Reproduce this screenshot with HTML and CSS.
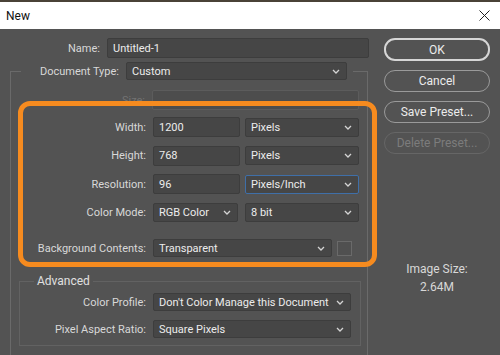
FILE: index.html
```html
<!DOCTYPE html>
<html lang="en">
<head>
  <meta charset="UTF-8">
  <meta name="viewport" content="width=device-width, initial-scale=1.0">
  <title>New</title>
  <link rel="stylesheet" href="styles.css">
</head>
<body>
  <div class="titlebar">
    <span class="title">New</span>
    <svg class="close" width="11" height="11" viewBox="0 0 11 11">
      <path d="M0.5 0.5 L10.5 10.5 M10.5 0.5 L0.5 10.5" stroke="#222" stroke-width="1" fill="none"/>
    </svg>
  </div>

  <div class="dialog">
    <div class="form">
      <div class="row nameRow">
        <label class="label">Name:</label>
        <div class="field nameField">Untitled-1</div>
      </div>

      <fieldset class="group">
        <legend class="row docRow">
          <span class="label">Document Type:</span>
          <div class="field select docField">Custom<svg class="chev" width="8" height="5" viewBox="0 0 8 5"><path d="M1 1 L4 4 L7 1" stroke="#d4d4d4" stroke-width="1.3" fill="none"/></svg></div>
        </legend>

        <div class="row sizeRow">
          <span class="label disabled">Size:</span>
          <div class="field disabledField"></div>
        </div>

        <div class="highlight">
          <div class="row">
            <span class="label">Width:</span>
            <div class="field num">1200</div>
            <div class="field select unit">Pixels<svg class="chev" width="8" height="5" viewBox="0 0 8 5"><path d="M1 1 L4 4 L7 1" stroke="#d4d4d4" stroke-width="1.3" fill="none"/></svg></div>
          </div>
          <div class="row">
            <span class="label">Height:</span>
            <div class="field num">768</div>
            <div class="field select unit">Pixels<svg class="chev" width="8" height="5" viewBox="0 0 8 5"><path d="M1 1 L4 4 L7 1" stroke="#d4d4d4" stroke-width="1.3" fill="none"/></svg></div>
          </div>
          <div class="row">
            <span class="label">Resolution:</span>
            <div class="field num">96</div>
            <div class="field select unit focused">Pixels/Inch<svg class="chev" width="8" height="5" viewBox="0 0 8 5"><path d="M1 1 L4 4 L7 1" stroke="#d4d4d4" stroke-width="1.3" fill="none"/></svg></div>
          </div>
          <div class="row">
            <span class="label">Color Mode:</span>
            <div class="field select mode">RGB Color<svg class="chev" width="8" height="5" viewBox="0 0 8 5"><path d="M1 1 L4 4 L7 1" stroke="#d4d4d4" stroke-width="1.3" fill="none"/></svg></div>
            <div class="field select unit">8 bit<svg class="chev" width="8" height="5" viewBox="0 0 8 5"><path d="M1 1 L4 4 L7 1" stroke="#d4d4d4" stroke-width="1.3" fill="none"/></svg></div>
          </div>
          <div class="row bgRow">
            <span class="label">Background Contents:</span>
            <div class="field select bgField">Transparent<svg class="chev" width="8" height="5" viewBox="0 0 8 5"><path d="M1 1 L4 4 L7 1" stroke="#d4d4d4" stroke-width="1.3" fill="none"/></svg></div>
            <div class="swatch"></div>
          </div>
        </div>

        <fieldset class="advanced">
          <legend class="advLegend">Advanced</legend>
          <div class="row">
            <span class="label advLabel">Color Profile:</span>
            <div class="field select advField">Don't Color Manage this Document<svg class="chev" width="8" height="5" viewBox="0 0 8 5"><path d="M1 1 L4 4 L7 1" stroke="#d4d4d4" stroke-width="1.3" fill="none"/></svg></div>
          </div>
          <div class="row">
            <span class="label advLabel">Pixel Aspect Ratio:</span>
            <div class="field select advField">Square Pixels<svg class="chev" width="8" height="5" viewBox="0 0 8 5"><path d="M1 1 L4 4 L7 1" stroke="#d4d4d4" stroke-width="1.3" fill="none"/></svg></div>
          </div>
        </fieldset>
      </fieldset>
    </div>

    <div class="side">
      <div class="btn default">OK</div>
      <div class="btn">Cancel</div>
      <div class="btn">Save Preset...</div>
      <div class="btn off">Delete Preset...</div>
      <div class="imageSize">
        <div>Image Size:</div>
        <div class="sizeValue">2.64M</div>
      </div>
    </div>
  </div>
</body>
</html>
```

FILE: styles.css
```css
body {
  margin: 0;
  width: 500px;
  height: 355px;
  overflow: hidden;
  background: #535353;
  font-family: Roboto, "Noto Sans", sans-serif;
  font-size: 11px;
  color: #d8d8d8;
}

.titlebar {
  height: 27px;
  border-top: 2px solid #4a4237;
  background: #ffffff;
  display: flex;
  align-items: center;
  justify-content: space-between;
  padding: 0 10px 0 6px;
}

.title {
  color: #111;
  font-size: 12px;
}

.dialog {
  display: flex;
  padding-top: 9px;
}

.form {
  width: 384px;
  flex: none;
}

.row {
  display: flex;
  align-items: center;
  gap: 7px;
}

.label {
  flex: none;
  text-align: right;
  white-space: nowrap;
}

.field {
  box-sizing: border-box;
  height: 20px;
  background: #464646;
  border: 1px solid #3d3d3d;
  border-radius: 2px;
  color: #ececec;
  padding-left: 5px;
  display: flex;
  align-items: center;
  white-space: nowrap;
  overflow: hidden;
}

.select {
  justify-content: space-between;
  padding-right: 6px;
  height: 19px;
}

.chev {
  flex: none;
}

.nameRow .label {
  width: 100px;
}

.nameField {
  width: 262px;
}

.group {
  box-sizing: border-box;
  width: 358px;
  margin: 4px 0 0 10px;
  padding: 0 0 20px 0;
  border: 1px solid #6a6a6a;
  min-width: 0;
}

.docRow {
  margin-left: 10px;
  padding: 0 6px 0 0;
  width: 332px;
  box-sizing: border-box;
}

.docRow .label {
  width: 98px;
}

.docField {
  width: 221px;
  height: 18px;
}

.sizeRow {
  margin-top: 10px;
}

.sizeRow .label {
  width: 134px;
}

.disabled {
  color: #727272;
}

.disabledField {
  width: 207px;
  background: #4d4d4d;
  border-color: #5c5c5c;
}

.highlight {
  position: relative;
  box-sizing: border-box;
  width: 359px;
  margin: -9px 0 0 7px;
  border: 5px solid #f68b1f;
  border-radius: 12px;
  padding: 11px 13px 5px 0;
  display: flex;
  flex-direction: column;
  gap: 8.5px;
}

.highlight .label {
  width: 123px;
}

.highlight .row {
  gap: 0;
}

.highlight .row .field:nth-child(2) {
  margin-left: 7px;
}

.num {
  width: 87px;
}

.unit {
  width: 114px;
  margin-left: 5px;
}

.mode {
  width: 85px;
  margin-left: 7px;
}

.mode + .unit {
  margin-left: 7px;
}

.focused {
  border-color: #3f6fa8;
}

.bgRow {
  margin-top: 9px;
}

.bgField {
  width: 179px;
  height: 18px;
}

.swatch {
  width: 15px;
  height: 15px;
  box-sizing: border-box;
  margin-left: 5px;
  border: 1px solid #6a6a6a;
  background: #505050;
}

.advanced {
  box-sizing: border-box;
  width: 342px;
  margin: 7px 0 0 8px;
  padding: 5px 0 7px 0;
  border: 1px solid #626262;
  min-width: 0;
  display: flex;
  flex-direction: column;
  gap: 9px;
}

.advLegend {
  margin-left: 14px;
  padding: 0 3px;
  font-size: 12px;
  color: #e0e0e0;
}

.advLabel {
  width: 126px;
}

.advField {
  width: 198px;
  height: 18px;
}

.side {
  width: 106px;
  display: flex;
  flex-direction: column;
  gap: 9px;
}

.btn {
  box-sizing: border-box;
  height: 22px;
  border: 1px solid #9a9a9a;
  border-radius: 11px;
  display: flex;
  align-items: center;
  justify-content: center;
  font-size: 12px;
  color: #ececec;
}

.default {
  height: 23px;
  border: 2px solid #d6d6d6;
}

.off {
  border-color: #666666;
  color: #7c7c7c;
}

.imageSize {
  margin-top: 99px;
  text-align: center;
  font-size: 12px;
  color: #d8d8d8;
}

.sizeValue {
  margin-top: 4px;
}
```
